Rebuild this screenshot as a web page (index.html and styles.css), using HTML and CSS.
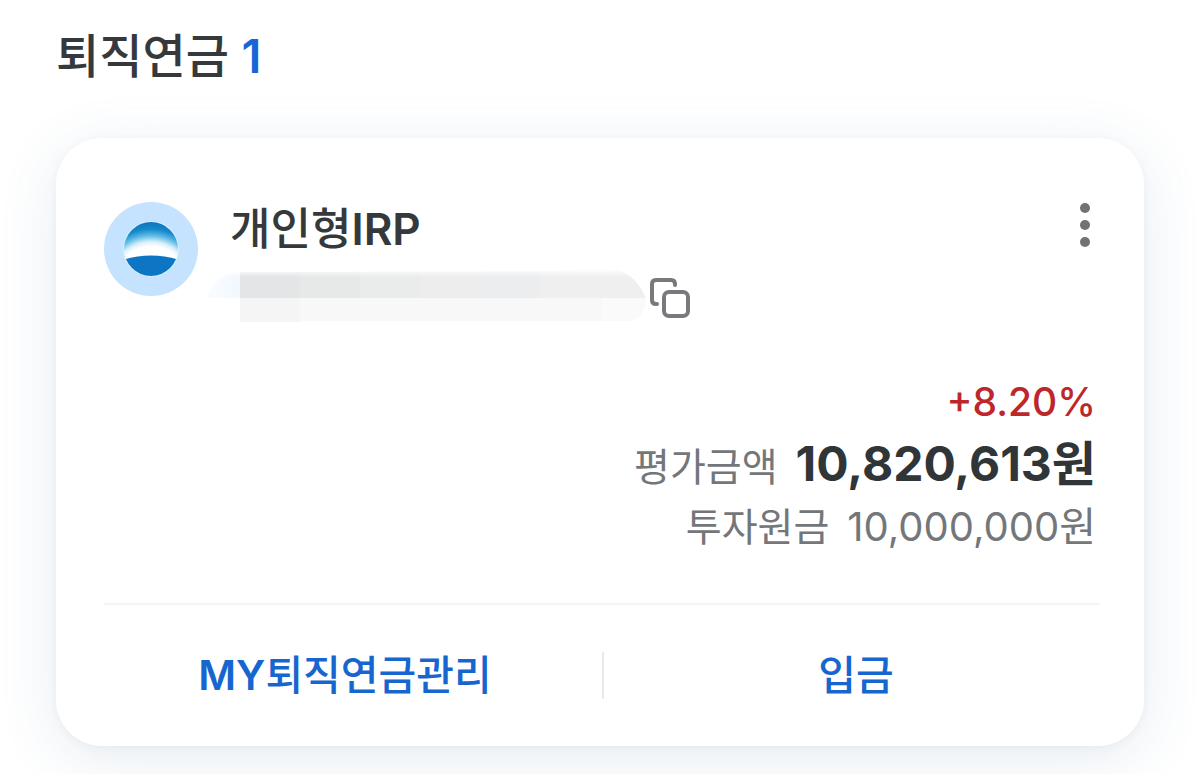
FILE: index.html
```
<!DOCTYPE html>
<html lang="ko">
<head>
    <meta charset="UTF-8">
    <meta name="viewport" content="width=device-width, initial-scale=1.0">
    <title>퇴직연금</title>
    <link rel="stylesheet" href="styles.css">
</head>
<body>
    <main class="page">
        <h1 class="title">퇴직연금 <span class="count">1</span></h1>

        <section class="card">
            <div class="card-head">
                <svg class="logo" viewBox="0 0 94 94" aria-hidden="true">
                    <defs>
                        <radialGradient id="glow" gradientUnits="userSpaceOnUse" cx="47" cy="80" r="66">
                            <stop offset="0.54" stop-color="#fff"/>
                            <stop offset="0.61" stop-color="#d9f0fa"/>
                            <stop offset="0.7" stop-color="#63bde6"/>
                            <stop offset="0.8" stop-color="#1689cb"/>
                            <stop offset="0.92" stop-color="#0b72bd"/>
                        </radialGradient>
                        <clipPath id="globe"><circle cx="47" cy="47" r="27"/></clipPath>
                    </defs>
                    <circle cx="47" cy="47" r="47" fill="#c5e3fe"/>
                    <circle cx="47" cy="47" r="28" fill="#d8eefe"/>
                    <g clip-path="url(#globe)">
                        <rect x="19" y="19" width="56" height="56" fill="url(#glow)"/>
                        <path d="M18 58Q47 49 76 58V76H18z" fill="#0d76c4"/>
                    </g>
                </svg>
                <div class="account">
                    <h2 class="account-name">개인형<span class="latin">IRP</span></h2>
                    <div class="account-row">
                        <svg class="mask" viewBox="0 0 444 60" aria-hidden="true">
                            <defs>
                                <linearGradient id="top-fade" x1="0" y1="0" x2="0" y2="1">
                                    <stop offset="0" stop-color="#fff" stop-opacity="0"/>
                                    <stop offset="0.3" stop-color="#fff"/>
                                </linearGradient>
                                <linearGradient id="left-fade">
                                    <stop offset="0" stop-color="#f1f8fe" stop-opacity="0.3"/>
                                    <stop offset="1" stop-color="#f1f8fe"/>
                                </linearGradient>
                                <mask id="soft"><path d="M0 30Q10 5 36 4L350 3Q400-3 418 4Q432 12 440 30z" fill="url(#top-fade)"/></mask>
                            </defs>
                            <g mask="url(#soft)">
                                <rect width="34" height="32" fill="url(#left-fade)"/>
                                <rect x="34" width="60" height="32" fill="#e4e5e6"/>
                                <rect x="94" width="60" height="32" fill="#e7e8e8"/>
                                <rect x="154" width="60" height="32" fill="#eaebeb"/>
                                <rect x="214" width="60" height="32" fill="#ededed"/>
                                <rect x="274" width="60" height="32" fill="#ebedee"/>
                                <rect x="334" width="110" height="32" fill="#efefef"/>
                            </g>
                            <path d="M34 30h60v24H34z" fill="#f5f5f6"/>
                            <path d="M94 30h302v23H94z" fill="#f8f8f8"/>
                            <path d="M396 30h44q-2 22-16 23h-28z" fill="#fafafa"/>
                        </svg>
                        <button class="icon-button" type="button" aria-label="계좌번호 복사">
                            <svg width="40" height="40" viewBox="0 0 40 40" fill="none" stroke="#77797c" stroke-width="4" stroke-linecap="round">
                                <path d="M25 7V6Q25 2 21 2H6Q2 2 2 6V22Q2 26 6 26H7"/>
                                <rect x="14" y="14" width="24" height="24" rx="5"/>
                            </svg>
                        </button>
                    </div>
                </div>
                <button class="icon-button" type="button" aria-label="더보기">
                    <svg width="30" height="46" viewBox="0 0 30 46" fill="#717275">
                        <circle cx="15" cy="6" r="5"/>
                        <circle cx="15" cy="23" r="5"/>
                        <circle cx="15" cy="40" r="5"/>
                    </svg>
                </button>
            </div>

            <div class="amounts">
                <p class="rate">+8.20%</p>
                <p class="amount"><span class="label">평가금액</span><strong class="total">10,820,613원</strong></p>
                <p class="amount"><span class="label">투자원금</span><span class="principal">10,000,000원</span></p>
            </div>

            <div class="actions">
                <button class="action" type="button"><span class="latin">MY</span>퇴직연금관리</button>
                <button class="action" type="button">입금</button>
            </div>
        </section>
    </main>
</body>
</html>
```

FILE: styles.css
```
* {
    box-sizing: border-box;
}
body {
    margin: 0;
    background: #fff;
    color: #35393c;
    font-family: Inter, "Noto Sans CJK KR", sans-serif;
}
h1, h2, p {
    margin: 0;
}
button {
    padding: 0;
    border: none;
    background: none;
    font-family: inherit;
    cursor: pointer;
}
svg {
    display: block;
}
.page {
    padding: 24px 56px 28px;
}
.title {
    margin-bottom: 50px;
    font-size: 47px;
    font-weight: 500;
    line-height: 64px;
}
.count {
    font-weight: 600;
    color: #1766d8;
}
.latin {
    font-weight: 600;
}
.card {
    padding: 60px 44px 0 48px;
    border-radius: 46px;
    background: #fff;
    box-shadow: 0 12px 60px rgba(50, 100, 150, 0.12), 0 2px 8px rgba(60, 80, 100, 0.05);
}
.card-head {
    display: flex;
    align-items: flex-start;
    padding-top: 4px;
}
.card-head > .icon-button {
    margin-left: auto;
}
.logo {
    width: 94px;
    height: 94px;
    flex: none;
}
.account {
    margin-left: 8px;
}
.account-name {
    margin-left: 24px;
    font-size: 44px;
    font-weight: 500;
    line-height: 54px;
}
.account-row {
    display: flex;
    align-items: center;
    margin-top: 12px;
}
.mask {
    width: 444px;
    height: 60px;
}
.amounts {
    padding: 42px 4px 46px 0;
    text-align: right;
}
.rate {
    font-size: 39px;
    font-weight: 500;
    line-height: 64px;
    color: #bd272c;
}
.amount {
    display: flex;
    justify-content: flex-end;
    align-items: baseline;
    gap: 18px;
    line-height: 60px;
    color: #73777a;
}
.label {
    font-size: 39px;
}
.total {
    font-size: 48px;
    font-weight: 700;
    color: #303538;
}
.principal {
    font-size: 40px;
}
.actions {
    display: grid;
    grid-template-columns: 1fr 1fr;
    padding: 47px 0;
    border-top: 2px solid #f3f4f5;
}
.action {
    padding-right: 16px;
    font-size: 41px;
    font-weight: 500;
    line-height: 47px;
    color: #1766d0;
}
.action + .action {
    padding: 0 0 0 8px;
    border-left: 2px solid #e9eaeb;
}
```
